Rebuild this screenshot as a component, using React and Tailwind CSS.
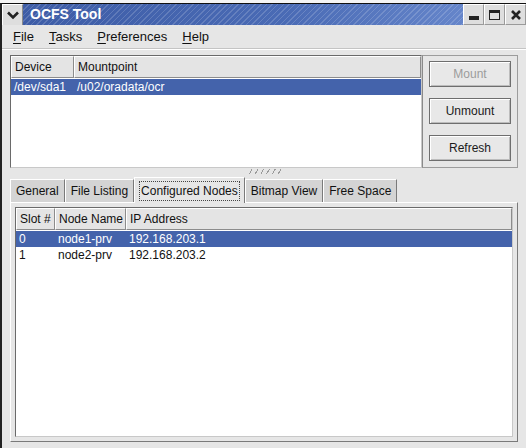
import React from 'react'

const font = { fontFamily: '"Liberation Sans", Arial, sans-serif' }

function U({ children, rest }) {
  return (
    <span>
      <span className="underline underline-offset-2">{children}</span>
      {rest}
    </span>
  )
}

function WinButton({ children }) {
  return (
    <div className="w-[21px] h-full flex items-center justify-center bg-[#dedede] border-l border-t border-white border-r border-r-[#9a9a9a] border-b border-b-[#9a9a9a]">
      {children}
    </div>
  )
}

function HeaderCell({ children, className = '' }) {
  return (
    <div className={`h-full shrink-0 flex items-center px-[3px] whitespace-nowrap overflow-hidden bg-[#e4e4e4] border-t border-l border-white border-r border-b border-r-[#8c8c8c] border-b-[#8c8c8c] ${className}`}>
      {children}
    </div>
  )
}

function GtkButton({ children, disabled }) {
  return (
    <div className={`h-[26px] flex items-center justify-center bg-[#e8e8e8] border border-[#6e6e6e] shadow-[inset_1px_1px_0_#ffffff,inset_-1px_-1px_0_#bcbcbc] ${disabled ? 'text-[#9c9c9c]' : 'text-[#1a1a1a]'}`}>
      {children}
    </div>
  )
}

function Tab({ children, active }) {
  if (active) {
    return (
      <div className="h-[26px] -mb-px px-[4px] flex items-center bg-[#e6e6e6] border-t border-l border-white border-r border-r-[#7a7a7a] relative z-10 whitespace-nowrap">
        <span className="px-[1px] border border-dotted border-[#444]">{children}</span>
      </div>
    )
  }
  return (
    <div className="h-[23px] px-[5px] flex items-center bg-[#d4d4d4] border-t border-l border-white border-r border-r-[#7a7a7a] whitespace-nowrap">
      {children}
    </div>
  )
}

export default function App() {
  return (
    <div className="w-[526px] h-[448px] overflow-hidden bg-[#e6e6e6] text-[12px] text-[#111] flex flex-col" style={font}>
      <div className="h-[3px] bg-[#f4f4f4]" />
      {/* Title bar */}
      <div className="h-[22px] flex border-t border-[#111] border-l-2 border-l-[#222]">
        <div className="w-[21px] flex items-center justify-center bg-[#dedede] border-t border-l border-white border-r border-r-[#8a8a8a]">
          <svg width="12" height="9" viewBox="0 0 12 9">
            <path d="M1 1.5 L6 6.5 L11 1.5" stroke="#222" strokeWidth="2.6" fill="none" />
          </svg>
        </div>
        <div className="flex-1 flex items-center pl-[7px] text-white font-bold text-[14px] bg-[image:repeating-linear-gradient(135deg,rgba(255,255,255,0.16)_0px,rgba(255,255,255,0.16)_1px,transparent_1px,transparent_4px),linear-gradient(to_right,#3d5ca6,#4a6bb5_60%,#6585ca)]">
          OCFS Tool
        </div>
        <WinButton>
          <div className="w-[10px] h-[4px] bg-[#222] mt-[6px]" />
        </WinButton>
        <WinButton>
          <div className="w-[11px] h-[10px] border border-[#222] border-t-[3px]" />
        </WinButton>
        <WinButton>
          <svg width="10" height="10" viewBox="0 0 10 10">
            <path d="M1 1 L9 9 M9 1 L1 9" stroke="#222" strokeWidth="2.6" />
          </svg>
        </WinButton>
      </div>

      {/* Window body */}
      <div className="flex-1 flex flex-col border-l-2 border-l-[#222]">
        {/* Menu bar */}
        <div className="h-[24px] flex items-center gap-[15px] pl-[11px] text-[13px] border-b border-[#c4c4c4]">
          <U rest="ile">F</U>
          <U rest="asks">T</U>
          <U rest="references">P</U>
          <U rest="elp">H</U>
        </div>
        <div className="h-px bg-white" />

        <div className="flex-1 flex flex-col px-[8px] pt-[5px]">
          {/* Top pane */}
          <div className="h-[113px] flex">
            <div className="w-[412px] flex flex-col bg-white border border-[#6a6a6a] border-r-[#c8c8c8] border-b-[#c8c8c8]">
              <div className="h-[22px] flex">
                <HeaderCell className="w-[63px]">Device</HeaderCell>
                <HeaderCell className="flex-1">Mountpoint</HeaderCell>
              </div>
              <div className="h-[16px] mt-px flex items-center bg-[#4463ab] text-white px-[3px]">
                <span className="w-[63px]">/dev/sda1</span>
                <span>/u02/oradata/ocr</span>
              </div>
            </div>
            <div className="flex-1 flex flex-col gap-[11px] px-[6px] pt-[5px] border border-[#9c9c9c] border-l-[#8a8a8a]">
              <GtkButton disabled>Mount</GtkButton>
              <GtkButton>Unmount</GtkButton>
              <GtkButton>Refresh</GtkButton>
            </div>
          </div>

          {/* Splitter */}
          <div className="h-[8px] flex justify-center items-start">
            <div className="w-[34px] h-[5px] mt-px bg-[image:repeating-linear-gradient(120deg,transparent_0px,transparent_4px,#9a9a9a_4px,#9a9a9a_5px)]" />
          </div>

          {/* Tabs */}
          <div className="flex items-end h-[26px]">
            <Tab>General</Tab>
            <Tab>File Listing</Tab>
            <Tab active>Configured Nodes</Tab>
            <Tab>Bitmap View</Tab>
            <Tab>Free Space</Tab>
          </div>
          <div className="h-[240px] border-t border-l border-white border-r border-r-[#7a7a7a] border-b border-b-[#7a7a7a] p-[4px]">
            <div className="h-full flex flex-col bg-white border border-[#6a6a6a] border-r-[#c8c8c8] border-b-[#c8c8c8]">
              <div className="h-[22px] flex">
                <HeaderCell className="w-[39px]">Slot #</HeaderCell>
                <HeaderCell className="w-[71px]">Node Name</HeaderCell>
                <HeaderCell className="flex-1">IP Address</HeaderCell>
              </div>
              <div className="h-[16px] mt-px flex items-center bg-[#4463ab] text-white pl-[3px]">
                <span className="w-[39px]">0</span>
                <span className="w-[71px]">node1-prv</span>
                <span>192.168.203.1</span>
              </div>
              <div className="h-[16px] flex items-center pl-[3px]">
                <span className="w-[39px]">1</span>
                <span className="w-[71px]">node2-prv</span>
                <span>192.168.203.2</span>
              </div>
            </div>
          </div>
        </div>
      </div>
    </div>
  )
}
